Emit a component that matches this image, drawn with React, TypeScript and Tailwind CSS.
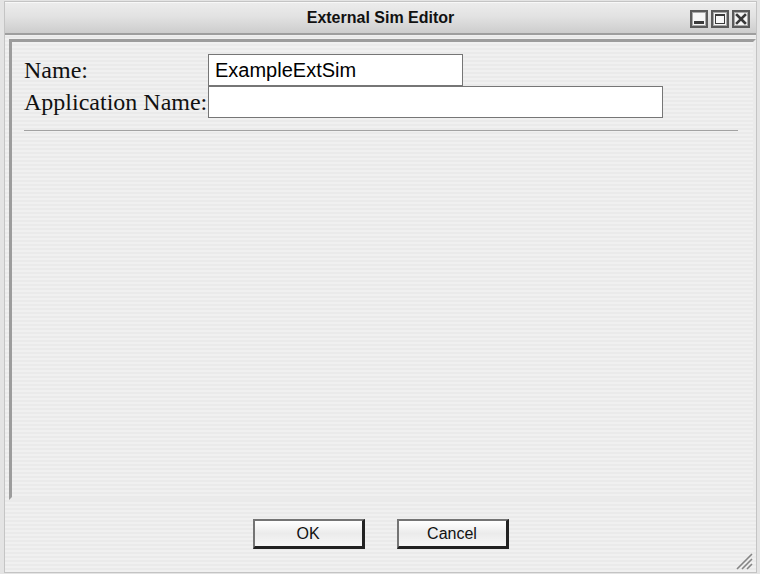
import React from "react";

const WinBtn = ({ kind }: { kind: "min" | "max" | "close" }) => (
  <svg width="18" height="18" viewBox="0 0 18 18">
    <rect x="0" y="0" width="18" height="18" fill="#5a5a5a" />
    <rect x="2" y="2" width="14" height="14" fill="#a8a8a8" />
    <rect x="3" y="3" width="12" height="12" fill="#f6f6f6" />
    {kind === "min" && <rect x="4" y="11" width="10" height="3" fill="#3a3a3a" />}
    {kind === "max" && (
      <>
        <rect x="4" y="4" width="10" height="10" fill="#3a3a3a" />
        <rect x="5" y="6" width="8" height="7" fill="#f8f8f8" />
      </>
    )}
    {kind === "close" && (
      <path d="M5 5 L13 13 M13 5 L5 13" stroke="#3a3a3a" strokeWidth="2.6" strokeLinecap="square" />
    )}
  </svg>
);

export default function App() {
  const stripes =
    "bg-[repeating-linear-gradient(to_bottom,#f0f0f0_0px,#f0f0f0_2px,#eaeaea_2px,#eaeaea_4px)]";
  const btn =
    "w-[112px] h-[30px] border-t-2 border-l-2 border-r-[3px] border-b-[3px] border-t-[#747474] border-l-[#747474] border-r-[#222] border-b-[#222] bg-[linear-gradient(to_bottom,#ffffff,#ebebeb_50%,#f7f7f7)] text-[16px] text-[#111] leading-none";
  return (
    <div
      className="w-[760px] h-[574px] bg-[#e4e4e4] pt-[1px] pb-[1px] pl-[4px] pr-[3px] overflow-hidden"
      style={{ fontFamily: '"Liberation Sans", Arial, sans-serif' }}
    >
      <div className={`relative flex flex-col h-full border border-[#c4c4c4] ${stripes}`}>
        {/* Title bar */}
        <div className="flex items-center h-[33px] border-t border-t-[#f8f8f8] border-b-2 border-b-[#9e9e9e] bg-[linear-gradient(to_bottom,#ececec,#e2e2e2_45%,#cdcdcd)]">
          <div className="flex-1" />
          <div className="ml-[6px] text-[16px] font-bold text-[#111] leading-none">External Sim Editor</div>
          <div className="flex-1 flex justify-end gap-[3px] pr-[6px] pt-[1px]">
            <WinBtn kind="min" />
            <WinBtn kind="max" />
            <WinBtn kind="close" />
          </div>
        </div>

        {/* Panel */}
        <div className="flex-1 mt-[4px] ml-[4px] border-[3px] border-t-[#9c9c9c] border-l-[#9c9c9c] border-r-[#ebebeb] border-b-[#ebebeb] pt-[12px] pl-[12px] pr-[15px]">
          <div className="grid grid-cols-[184px_auto] items-center" style={{ fontFamily: '"Liberation Serif", "Times New Roman", serif' }}>
            <div className="text-[24px] leading-[32px] text-[#111]">Name:</div>
            <input
              defaultValue="ExampleExtSim"
              className="w-[255px] h-[32px] bg-white border border-[#767676] px-[6px] text-[20px] text-black outline-none"
              style={{ fontFamily: '"Liberation Sans", Arial, sans-serif' }}
            />
            <div className="text-[24px] leading-[32px] text-[#111]">Application Name:</div>
            <input
              defaultValue=""
              className="w-[455px] h-[32px] bg-white border border-[#767676] px-[6px] text-[20px] text-black outline-none"
              style={{ fontFamily: '"Liberation Sans", Arial, sans-serif' }}
            />
          </div>
          <div className="mt-[12px] border-t border-[#a2a2a2]" />
        </div>

        {/* Buttons */}
        <div className="h-[72px] flex justify-center gap-[32px] pt-[19px]">
          <button className={btn}>OK</button>
          <button className={btn}>Cancel</button>
        </div>

        {/* Resize grip */}
        <svg className="absolute right-[3px] bottom-[2px]" width="18" height="18" viewBox="0 0 18 18">
          <path d="M17 2 L2 17 M17 7 L7 17 M17 12 L12 17" stroke="#858585" strokeWidth="1.6" />
        </svg>
      </div>
    </div>
  );
}
